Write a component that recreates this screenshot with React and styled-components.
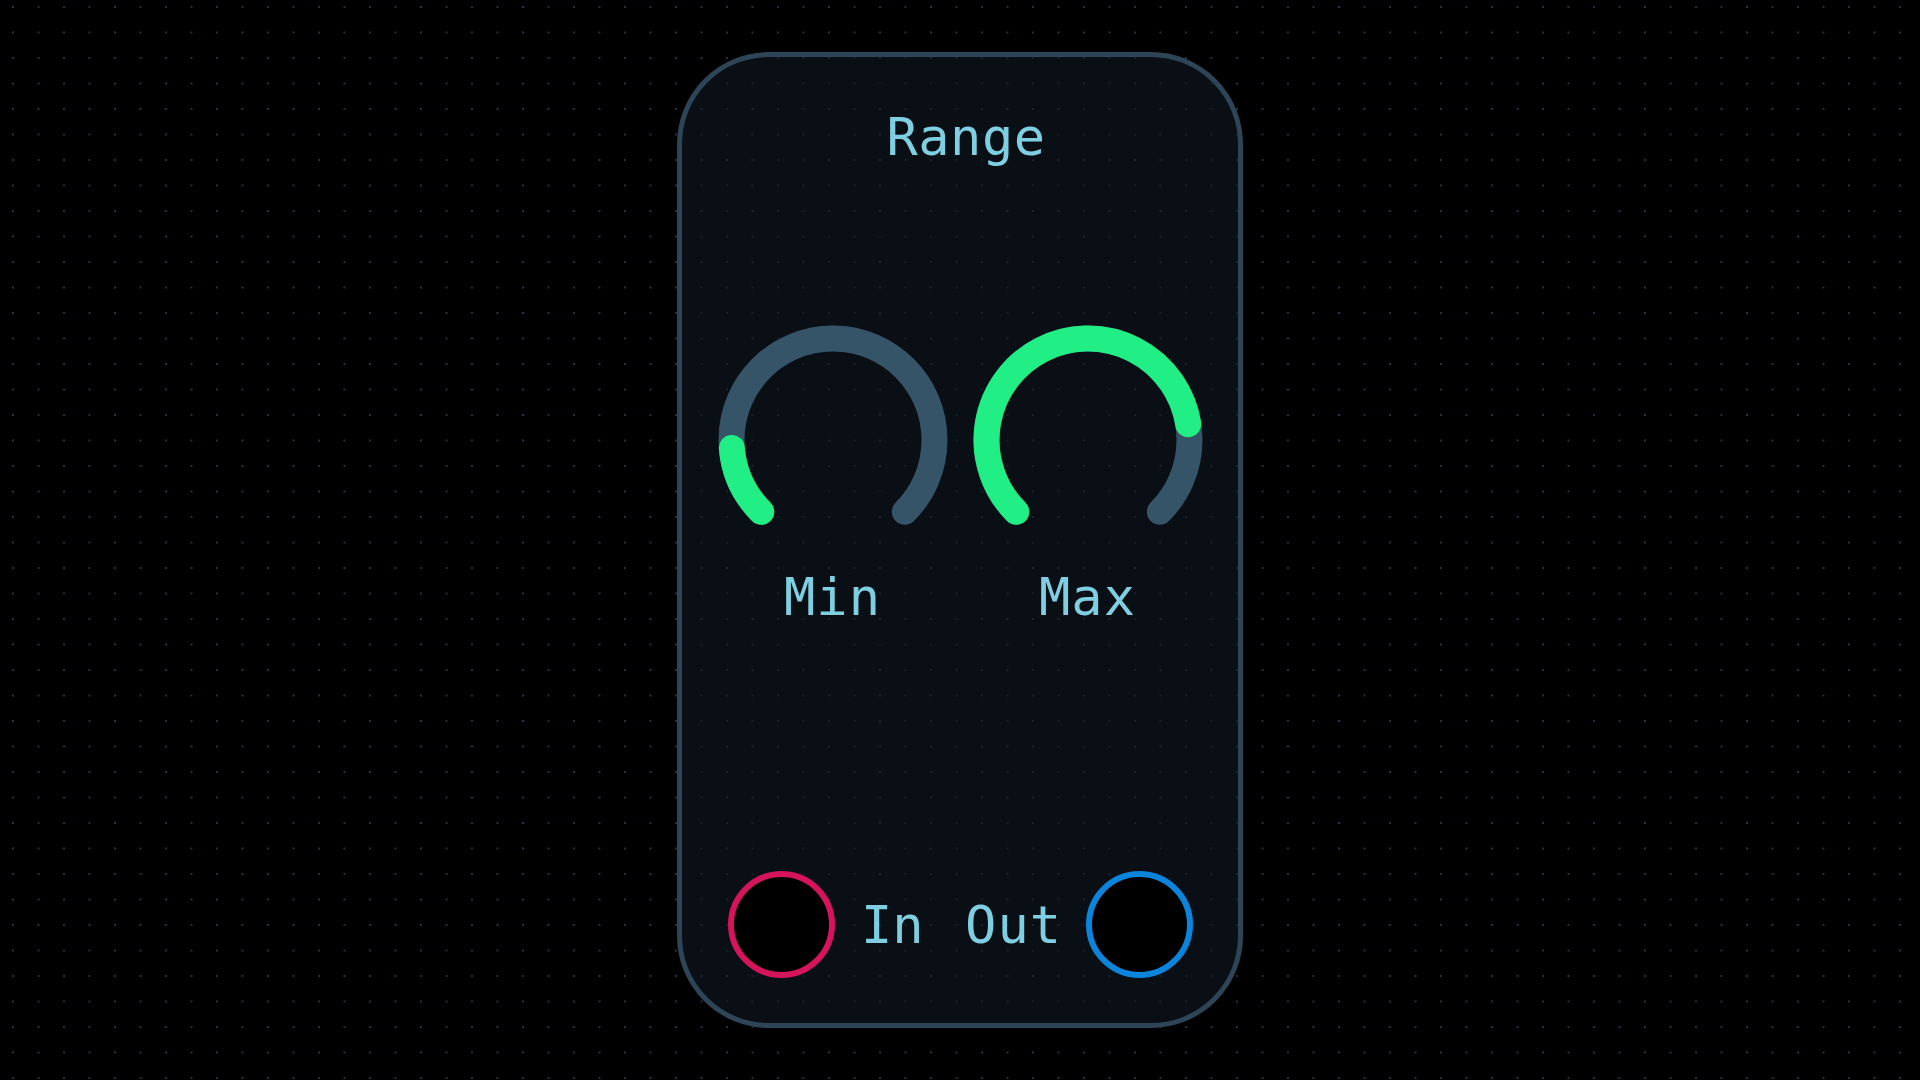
import React from "react";
import styled, { createGlobalStyle } from "styled-components";

const Global = createGlobalStyle`
  html, body { margin: 0; padding: 0; background: #000; }
  body {
    background-color: #000;
    background-image: radial-gradient(circle, #1f3344 0.9px, transparent 1.4px);
    background-size: 25.5px 25.5px;
    background-position: 0.25px -5.75px;
    font-family: "DejaVu Sans Mono", "Liberation Mono", monospace;
  }
`;

const Stage = styled.div`
  width: 1920px;
  height: 1080px;
  display: flex;
  align-items: center;
  justify-content: center;
`;

const Card = styled.div`
  box-sizing: border-box;
  width: 566px;
  height: 976px;
  border: 5px solid #2d4556;
  border-radius: 92px;
  background-color: #0a0e15;
  background-image: radial-gradient(circle, #15222d 0.9px, transparent 1.4px);
  background-size: 25.5px 25.5px;
  background-position: 0.25px -5.75px;
  background-attachment: fixed;
  display: flex;
  flex-direction: column;
  align-items: center;
  padding: 50px 0 45px;
`;

const Text = styled.div`
  color: #7ecfe1;
  font-family: "DejaVu Sans Mono", "Liberation Mono", monospace;
  font-size: 52px;
  line-height: 60px;
  letter-spacing: ${(p) => p.$ls || 0}px;
  white-space: nowrap;
`;

const Title = styled(Text)`
  padding-left: 12px;
  letter-spacing: 0.5px;
`;

const KnobRow = styled.div`
  display: flex;
  gap: 25px;
  margin-top: 157px;
`;

const KnobCol = styled.div`
  width: 230px;
  display: flex;
  flex-direction: column;
  align-items: center;
  gap: 41px;
`;

const Spacer = styled.div`
  flex: 1;
`;

const JackRow = styled.div`
  align-self: stretch;
  display: flex;
  justify-content: space-between;
  align-items: center;
  padding: 0 45px 0 46px;
`;

const JackGroup = styled.div`
  display: flex;
  align-items: center;
  gap: ${(p) => p.$gap}px;
`;

const Jack = styled.div`
  box-sizing: border-box;
  width: 107px;
  height: 107px;
  border-radius: 50%;
  border: 6px solid ${(p) => p.$color};
  background: #000;
`;

const CX = 115;
const CY = 116;
const R = 101.5;

function pt(deg) {
  const a = (deg * Math.PI) / 180;
  return [CX + R * Math.sin(a), CY - R * Math.cos(a)];
}

function arc(from, to) {
  const [x1, y1] = pt(from);
  const [x2, y2] = pt(to);
  const large = to - from > 180 ? 1 : 0;
  return `M ${x1} ${y1} A ${R} ${R} 0 ${large} 1 ${x2} ${y2}`;
}

function Knob({ value }) {
  const end = -135 + 270 * value;
  return (
    <svg width="230" height="202" viewBox="0 0 230 202">
      <path d={arc(-135, 135)} fill="none" stroke="#365467" strokeWidth="26" strokeLinecap="round" />
      <path d={arc(-135, end)} fill="none" stroke="#21ef85" strokeWidth="26" strokeLinecap="round" />
    </svg>
  );
}

export default function App() {
  return (
    <>
      <Global />
      <Stage>
        <Card>
          <Title>Range</Title>
          <KnobRow>
            <KnobCol>
              <Knob value={0.15} />
              <Text $ls={1}>Min</Text>
            </KnobCol>
            <KnobCol>
              <Knob value={0.8} />
              <Text $ls={1}>Max</Text>
            </KnobCol>
          </KnobRow>
          <Spacer />
          <JackRow>
            <JackGroup $gap={26}>
              <Jack $color="#d5145b" />
              <Text>In</Text>
            </JackGroup>
            <JackGroup $gap={24}>
              <Text $ls={1}>Out</Text>
              <Jack $color="#0b85dc" />
            </JackGroup>
          </JackRow>
        </Card>
      </Stage>
    </>
  );
}
